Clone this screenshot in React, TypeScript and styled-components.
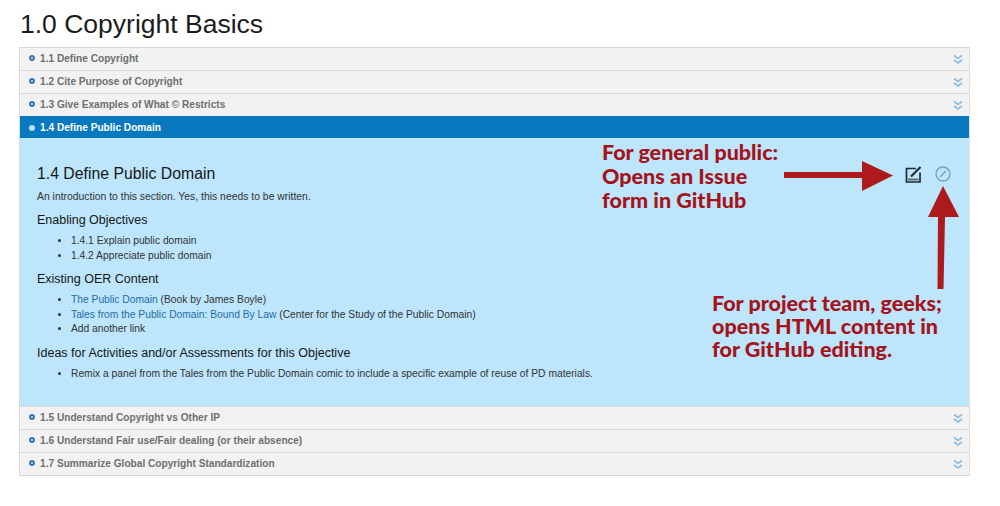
import React from "react";
import styled, { createGlobalStyle } from "styled-components";

const GlobalStyle = createGlobalStyle`
  html, body {
    margin: 0;
    background: #ffffff;
    font-family: "Liberation Sans", Arial, sans-serif;
  }
`;

const Page = styled.div`
  position: relative;
  width: 1000px;
  height: 506px;
  padding: 10px 30px 0 19px;
  box-sizing: border-box;
  overflow: hidden;
`;

const Title = styled.h1`
  margin: 0 0 9px 1px;
  font-size: 26.5px;
  line-height: 28px;
  font-weight: 400;
  color: #1c1c1c;
`;

const Accordion = styled.div`
  border: 1px solid #d5d5d5;
  border-top: none;
  border-right-color: #e2e2e2;
`;

const Row = styled.div<{ $active?: boolean }>`
  display: flex;
  align-items: center;
  gap: 5px;
  height: ${(p) => (p.$active ? "22px" : "23px")};
  padding: 0 6px ${(p) => (p.$active ? "0" : "2px")} 9px;
  box-sizing: border-box;
  background: ${(p) => (p.$active ? "#0878bf" : "#f2f2f2")};
  border-top: 1px solid ${(p) => (p.$active ? "#0878bf" : "#d9d9d9")};
  color: ${(p) => (p.$active ? "#ffffff" : "#6f6f6f")};
  font-size: 10.15px;
  font-weight: 700;
`;

const Bullet = styled.span<{ $active?: boolean }>`
  width: 6px;
  height: 6px;
  box-sizing: border-box;
  border-radius: 50%;
  border: 2px solid ${(p) => (p.$active ? "#b9dcf2" : "#3f79b5")};
  background: ${(p) => (p.$active ? "#d8ecf8" : "#c9d9ea")};
`;

const RowLabel = styled.span`
  flex: 1;
`;

const Panel = styled.div`
  height: 268px;
  box-sizing: border-box;
  padding: 27px 17px 0;
  background: #bde5fc;
  color: #333333;
`;

const PanelTitle = styled.h2`
  margin: 0 0 7px;
  font-size: 15.8px;
  line-height: 18px;
  font-weight: 400;
  color: #161616;
`;

const Intro = styled.p`
  margin: 0 0 8px;
  font-size: 10.4px;
  line-height: 14px;
`;

const SubHeading = styled.h3`
  margin: 0 0 6px;
  font-size: 12.5px;
  line-height: 16px;
  font-weight: 400;
  color: #161616;
`;

const List = styled.ul`
  margin: 0 0 8px;
  padding: 0 0 0 34px;
  font-size: 10.28px;
  line-height: 14.5px;
`;

const Anchor = styled.a`
  color: #1f6fa8;
  text-decoration: none;
`;

const Note = styled.div<{ $x: number; $y: number; $lh: number }>`
  position: absolute;
  left: ${(p) => p.$x}px;
  top: ${(p) => p.$y}px;
  font-family: Lato, "Open Sans", sans-serif;
  font-weight: 900;
  font-size: 21.5px;
  line-height: ${(p) => p.$lh}px;
  color: #a5141a;
  white-space: pre;
`;

const Overlay = styled.svg`
  position: absolute;
  left: 0;
  top: 0;
  pointer-events: none;
`;

const ChevronIcon = styled.svg`
  margin-top: 2px;
`;

const Chevrons = () => (
  <ChevronIcon width="10" height="11" viewBox="0 0 10 11" fill="none" stroke="#8dbfe4" strokeWidth="1.7">
    <path d="M1 1.5 L5 4.5 L9 1.5" />
    <path d="M1 6 L5 9 L9 6" />
  </ChevronIcon>
);

const before = ["1.1 Define Copyright", "1.2 Cite Purpose of Copyright", "1.3 Give Examples of What © Restricts"];
const after = [
  "1.5 Understand Copyright vs Other IP",
  "1.6 Understand Fair use/Fair dealing (or their absence)",
  "1.7 Summarize Global Copyright Standardization",
];

const ClosedRow = ({ label }: { label: string }) => (
  <Row>
    <Bullet />
    <RowLabel>{label}</RowLabel>
    <Chevrons />
  </Row>
);

export default function App() {
  return (
    <Page>
      <GlobalStyle />
      <Title>1.0 Copyright Basics</Title>
      <Accordion>
        {before.map((label) => (
          <ClosedRow key={label} label={label} />
        ))}
        <Row $active>
          <Bullet $active />
          <RowLabel>1.4 Define Public Domain</RowLabel>
        </Row>
        <Panel>
          <PanelTitle>1.4 Define Public Domain</PanelTitle>
          <Intro>An introduction to this section. Yes, this needs to be written.</Intro>
          <SubHeading>Enabling Objectives</SubHeading>
          <List>
            <li>1.4.1 Explain public domain</li>
            <li>1.4.2 Appreciate public domain</li>
          </List>
          <SubHeading>Existing OER Content</SubHeading>
          <List>
            <li>
              <Anchor>The Public Domain</Anchor> (Book by James Boyle)
            </li>
            <li>
              <Anchor>Tales from the Public Domain: Bound By Law</Anchor> (Center for the Study of the Public Domain)
            </li>
            <li>Add another link</li>
          </List>
          <SubHeading>Ideas for Activities and/or Assessments for this Objective</SubHeading>
          <List>
            <li>Remix a panel from the Tales from the Public Domain comic to include a specific example of reuse of PD materials.</li>
          </List>
        </Panel>
        {after.map((label) => (
          <ClosedRow key={label} label={label} />
        ))}
      </Accordion>

      <Note $x={602} $y={140} $lh={24}>{"For general public:\nOpens an Issue\nform in GitHub"}</Note>
      <Note $x={712} $y={292} $lh={23}>{"For project team, geeks;\nopens HTML content in\nfor GitHub editing."}</Note>

      <Overlay width="1000" height="506" viewBox="0 0 1000 506">
        {/* edit icon */}
        <path d="M916 168.5 H906.5 V182 H920 V172.5" fill="none" stroke="#1d2b36" strokeWidth="1.7" />
        <path d="M911 176.5 L920.5 167" fill="none" stroke="#1d2b36" strokeWidth="2.2" />
        <path d="M908 179.5 H918.5" stroke="#5d6f7c" strokeWidth="2" />
        {/* pencil circle icon */}
        <circle cx="943" cy="174" r="7" fill="none" stroke="#7f9fb8" strokeWidth="1.4" />
        <path d="M940 177 L946 171" stroke="#7f9fb8" strokeWidth="1.5" />
        {/* horizontal arrow */}
        <path d="M784 172 H864 V178 H784 Z" fill="#ad1a1c" />
        <path d="M862 161 L893 175.5 L862 191 Z" fill="#ad1a1c" />
        {/* vertical arrow */}
        <path d="M938 217 H945 L943.5 289 H937.5 Z" fill="#ad1a1c" />
        <path d="M943 186 L928 217 H959 Z" fill="#ad1a1c" />
      </Overlay>
    </Page>
  );
}
